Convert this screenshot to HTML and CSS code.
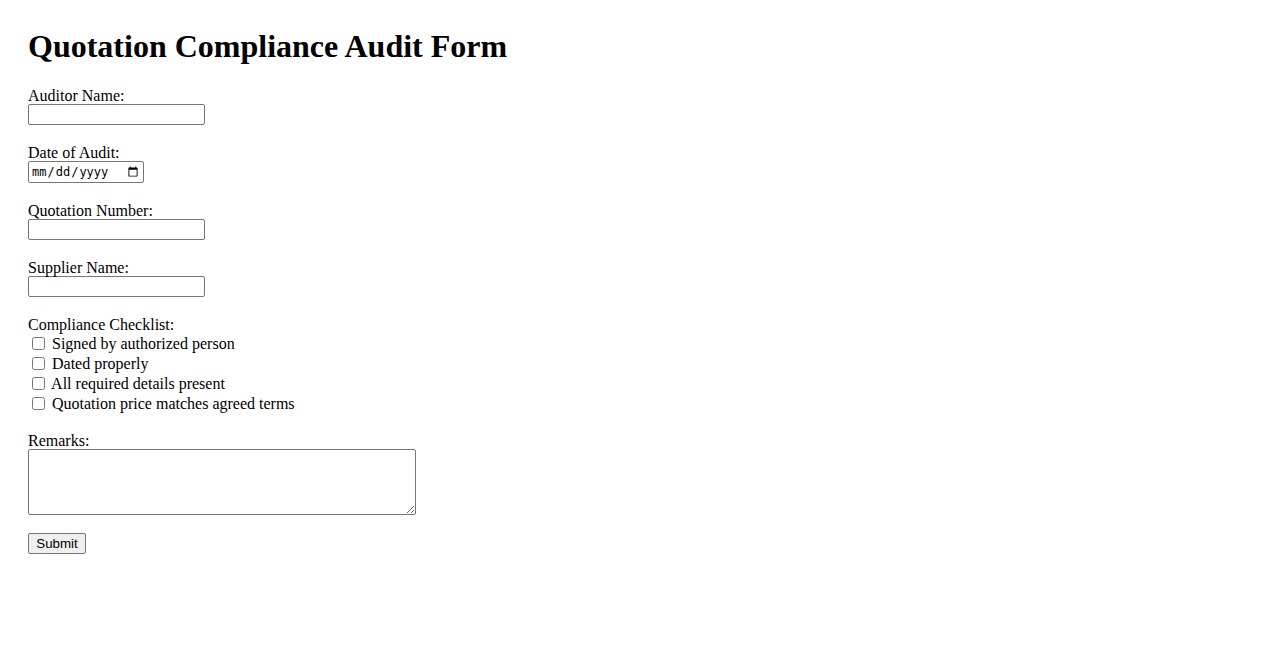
FILE: index.html
```html
<!DOCTYPE html>
<html lang="en">
<head>
<meta charset="utf-8">
<title>Quotation Compliance Audit Form</title>
<link rel="stylesheet" href="styles.css">
</head>
<body>
<h1 class="title">Quotation Compliance Audit Form</h1>
<form class="audit-form">
  <div class="field">
    <label class="field-label" for="auditor">Auditor Name:</label>
    <input class="text-input" type="text" id="auditor">
  </div>
  <div class="field">
    <label class="field-label" for="date">Date of Audit:</label>
    <input class="date-input" type="date" id="date">
  </div>
  <div class="field">
    <label class="field-label" for="qnum">Quotation Number:</label>
    <input class="text-input" type="text" id="qnum">
  </div>
  <div class="field">
    <label class="field-label" for="supplier">Supplier Name:</label>
    <input class="text-input" type="text" id="supplier">
  </div>
  <div class="field">
    <div class="field-label">Compliance Checklist:</div>
    <label class="check-row"><input class="check" type="checkbox"><span class="check-text"> Signed by authorized person</span></label>
    <label class="check-row"><input class="check" type="checkbox"><span class="check-text"> Dated properly</span></label>
    <label class="check-row"><input class="check" type="checkbox"><span class="check-text"> All required details present</span></label>
    <label class="check-row"><input class="check" type="checkbox"><span class="check-text"> Quotation price matches agreed terms</span></label>
  </div>
  <div class="field">
    <label class="field-label" for="remarks">Remarks:</label>
    <textarea class="remarks" id="remarks"></textarea>
  </div>
  <button class="submit-btn" type="submit">Submit</button>
</form>
</body>
</html>
```

FILE: styles.css
```css
html, body {
  background: #ffffff;
}
body {
  margin: 8px;
  padding: 20px;
  font-family: "Liberation Serif", "Times New Roman", serif;
  font-size: 16px;
  color: #000000;
}
.title {
  margin: 0 0 21.44px 0;
  font-size: 32px;
  font-weight: bold;
  line-height: 37px;
}
.field {
  margin-bottom: 18px;
}
.field-label {
  display: block;
  height: 18px;
  line-height: 19px;
}
.text-input {
  display: block;
  box-sizing: border-box;
  width: 177px;
  height: 21px;
  margin: 0;
  padding: 1px 2px;
  border: 1px solid #767676;
  border-radius: 2px;
  font-family: "Liberation Sans", Arial, sans-serif;
  font-size: 13.33px;
  background: #ffffff;
}
.date-input {
  display: block;
  box-sizing: border-box;
  width: 116px;
  height: 22px;
  margin: 0;
  padding: 1px 2px;
  border: 1px solid #767676;
  border-radius: 2px;
  font-family: "DejaVu Sans Mono", "Liberation Mono", monospace;
  font-size: 12px;
  color: #000000;
  background: #ffffff;
}
.check-row {
  display: flex;
  align-items: center;
  height: 20px;
}
.check {
  width: 13px;
  height: 13px;
  margin: 0 3px 0 4px;
  flex: none;
}
.check-text {
  white-space: pre;
  padding-top: 2px;
}
.remarks {
  display: block;
  box-sizing: border-box;
  width: 388px;
  height: 66px;
  margin: 0;
  padding: 2px;
  border: 1px solid #767676;
  border-radius: 2px;
  resize: both;
  font-family: "Liberation Mono", monospace;
  font-size: 13.33px;
}
.submit-btn {
  box-sizing: border-box;
  width: 58px;
  height: 21px;
  margin: 0;
  padding: 1px 6px;
  border: 1px solid #767676;
  border-radius: 2px;
  background: #efefef;
  font-family: "Liberation Sans", Arial, sans-serif;
  font-size: 13.33px;
  color: #000000;
}
```
